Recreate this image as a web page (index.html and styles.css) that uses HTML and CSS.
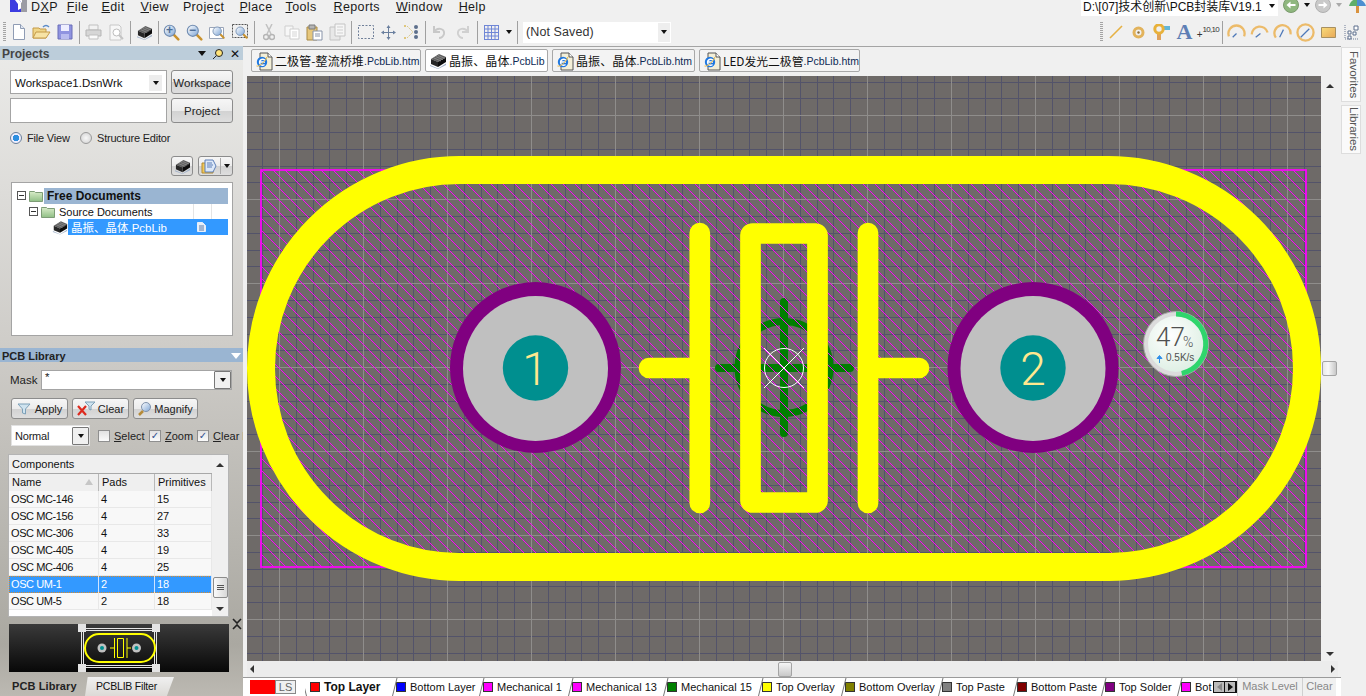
FILE: index.html
```html
<!DOCTYPE html>
<html lang="en">
<head>
<meta charset="utf-8">
<title>Altium Designer - PCB Library</title>
<link rel="stylesheet" href="styles.css">
</head>
<body>
<svg class="defs" width="0" height="0" aria-hidden="true">
  <defs>
    <linearGradient id="btnLens" x1="0" y1="0" x2="1" y2="1"><stop offset="0" stop-color="#ffffff"/><stop offset="1" stop-color="#7fa6d6"/></linearGradient>
    <linearGradient id="folder" x1="0" y1="0" x2="0" y2="1"><stop offset="0" stop-color="#d9ecc9"/><stop offset="1" stop-color="#8fbf85"/></linearGradient>
    <symbol id="ie" viewBox="0 0 18 20">
      <path d="M5 2h8l4 4v13H5z" fill="#f3efd8" stroke="#555"/>
      <path d="M13 2v4h4" fill="#fff" stroke="#555"/>
      <circle cx="7" cy="11" r="5.200" fill="#1f78e0"/>
      <path d="M4 11h6M10 9.500A3 3 0 1 0 9.500 13.500" fill="none" stroke="#fff" stroke-width="1.400"/>
      <path d="M1.500 15c2 1 8-3 10.500-9" fill="none" stroke="#e7b43c" stroke-width="1"/>
    </symbol>
    <symbol id="chip" viewBox="0 0 18 16">
      <path d="M1 12l8 3.500 8-5v1.500l-8 4-8-3z" fill="#9fb0c8"/>
      <path d="M2 6l8-5 7 3-8 5z" fill="#5e5e5e"/>
      <path d="M2 6l7 3v5l-7-3z" fill="#262626"/>
      <path d="M9 9l8-5v5l-8 5z" fill="#0d0d0d"/>
      <path d="M5 5l7 3M7 3.700l7 3M9 2.500l7 3" stroke="#9a9a9a" stroke-width=".7"/>
    </symbol>
    <symbol id="magnifier" viewBox="0 0 20 20">
      <path d="M12 12l6 6" stroke="#c9922e" stroke-width="3" stroke-linecap="round"/>
      <circle cx="8" cy="8" r="6.500" fill="url(#btnLens)" stroke="#6f8bb0" stroke-width="1.300"/>
    </symbol>
    <symbol id="foldericon" viewBox="0 0 14 12">
      <path d="M0.500 2.500V1.500h5l1 1h7v9H.5z" fill="url(#folder)" stroke="#7d9c76"/>
    </symbol>
  </defs>
</svg>

<header class="menubar">
  <svg class="logo" viewBox="0 0 17 12" width="17" height="12"><path d="M0 0h11v12H0z" fill="#3c3ce0"/><path d="M5 0h4l3 3v5l-4 2V4z" fill="#fff"/><path d="M11 0h6v12h-6z" fill="#9c9ca4"/><path d="M9 0h3l0 3z" fill="#fff"/></svg>
  <nav class="menus">
    <span class="menu menu-dxp">D<u>X</u>P</span>
    <span class="menu menu-file"><u>F</u>ile</span>
    <span class="menu menu-edit"><u>E</u>dit</span>
    <span class="menu menu-view"><u>V</u>iew</span>
    <span class="menu">Proje<u>c</u>t</span>
    <span class="menu menu-place"><u>P</u>lace</span>
    <span class="menu menu-tools"><u>T</u>ools</span>
    <span class="menu menu-wide"><u>R</u>eports</span>
    <span class="menu menu-wide"><u>W</u>indow</span>
    <span class="menu"><u>H</u>elp</span>
  </nav>
  <div class="pathbox"><span class="pathtext">D:\[07]技术创新\PCB封装库V19.1</span><span class="caret pathcaret"></span></div>
  <div class="navbtns">
    <svg width="16" height="16" viewBox="0 0 16 16"><circle cx="8" cy="8" r="7.500" fill="#8fb77f" stroke="#7a9a6d"/><path d="M3.500 8l4-3.500V7h5v2h-5v2.500z" fill="#fff"/></svg>
    <span class="caret caret-nav"></span>
    <svg width="16" height="16" viewBox="0 0 16 16"><circle cx="8" cy="8" r="7.500" fill="#c9c9c9" stroke="#b0b0b0"/><path d="M12.500 8l-4-3.500V7h-5v2h5v2.500z" fill="#fff"/></svg>
    <span class="caret caret-nav caret-off"></span>
    <svg class="treeicon" width="19" height="14" viewBox="0 0 19 14"><path d="M8 7h3v7H8z" fill="#d9923e"/><path d="M1 7c1-4 4-7 8-7v7z" fill="#5fae6a"/><path d="M9 0c4 0 8 3 9 7H9z" fill="#4d8fd0"/></svg>
  </div>
</header>

<div class="toolbar">
  <span class="grip"></span>
  <span class="tool"><svg width="16" height="18" viewBox="0 0 16 18"><path d="M2.500 1.500h7l4 4v11h-11z" fill="#fff" stroke="#8f9cb4"/><path d="M9.500 1.500v4h4" fill="#dfe6f2" stroke="#8f9cb4"/></svg></span>
  <span class="tool"><svg width="19" height="16" viewBox="0 0 19 16"><path d="M1 14V4h6l1 1h6v9z" fill="#f0d689" stroke="#c49a49"/><path d="M1 14l3-6h14l-4 6z" fill="#f7e3a5" stroke="#c49a49"/><path d="M11 3c2-2 4-2 6 0" fill="none" stroke="#5b8bc9" stroke-width="1.500"/></svg></span>
  <span class="tool"><svg width="16" height="16" viewBox="0 0 16 16"><path d="M1 1h14v14H1z" fill="#8f93e0" stroke="#6a6fb8"/><path d="M4 1h8v6H4z" fill="#eef"/><path d="M4 10h8v5H4z" fill="#b9bcef"/></svg></span>
  <span class="sep sep-w"></span>
  <span class="tool"><svg width="17" height="16" viewBox="0 0 17 16"><path d="M4 1h9v5H4z" fill="#f2f2f2" stroke="#c0c0c0"/><path d="M1 6h15v6H1z" fill="#d6d6d6" stroke="#b5b5b5"/><path d="M4 11h9v4H4z" fill="#fafafa" stroke="#c0c0c0"/></svg></span>
  <span class="tool"><svg width="17" height="17" viewBox="0 0 17 17"><path d="M2 1h9l2 2v13H2z" fill="#f7f7f7" stroke="#c8c8c8"/><circle cx="8.500" cy="8.500" r="3.500" fill="#fff" stroke="#bdbdbd"/><path d="M11 11l4 4" stroke="#c4c4c4" stroke-width="2"/></svg></span>
  <span class="sep"></span>
  <span class="tool"><svg width="17" height="15"><use href="#chip"/></svg></span>
  <span class="sep sep-n"></span>
  <span class="tool"><span class="mag"><svg width="17" height="17"><use href="#magnifier"/></svg><i class="plus">+</i></span></span>
  <span class="tool"><span class="mag"><svg width="17" height="17"><use href="#magnifier"/></svg><i class="plus">−</i></span></span>
  <span class="tool"><span class="mag"><svg width="17" height="17" viewBox="0 0 17 17"><path d="M.5 3.500h14v11H.5z" fill="#fff" stroke="#9aa5b8"/><use href="#magnifier" x="3" y="2" width="13" height="13"/></svg></span></span>
  <span class="tool"><span class="mag"><svg width="17" height="17" viewBox="0 0 17 17"><path d="M.5 .5h15v13H.5z" fill="none" stroke="#555" stroke-dasharray="2 1"/><use href="#magnifier" x="3" y="2" width="13" height="13"/></svg></span></span>
  <span class="sep"></span>
  <span class="tool"><svg width="12" height="17" viewBox="0 0 12 17"><path d="M3 0l5 10M9 0L4 10" stroke="#c2c2c2" stroke-width="1.500"/><circle cx="3" cy="13" r="2.500" fill="none" stroke="#b5b5b5" stroke-width="1.500"/><circle cx="9" cy="13" r="2.500" fill="none" stroke="#b5b5b5" stroke-width="1.500"/></svg></span>
  <span class="tool"><svg width="16" height="15" viewBox="0 0 16 15"><path d="M1 1h8v10H1z" fill="#f7f7f7" stroke="#cfcfcf"/><path d="M6 4h9v10H6z" fill="#fff" stroke="#cfcfcf"/><path d="M8 7h5M8 9h5M8 11h5" stroke="#d5d5d5"/></svg></span>
  <span class="tool"><svg width="17" height="17" viewBox="0 0 17 17"><path d="M1 3h10v13H1z" fill="#e6c77c" stroke="#a98a44"/><path d="M3 1h6v4H3z" fill="#b5b5b5" stroke="#7a7a7a"/><path d="M7 7h9v9H7z" fill="#fff" stroke="#8893a8"/><path d="M9 10h5M9 12h5" stroke="#8893a8"/></svg></span>
  <span class="tool"><svg width="17" height="18" viewBox="0 0 17 18"><path d="M1 4h10v13H1z" fill="#e8e8e8" stroke="#c4c4c4"/><path d="M6 1h10v12H6z" fill="#f6f6f6" stroke="#c4c4c4"/><path d="M8 4h6M8 7h6M8 10h6" stroke="#cfcfcf"/></svg></span>
  <span class="sep"></span>
  <span class="tool"><svg width="16" height="14" viewBox="0 0 16 14"><path d="M.5 .5h15v13H.5z" fill="none" stroke="#6f7f99" stroke-dasharray="2 1.500"/></svg></span>
  <span class="tool"><svg width="15" height="15" viewBox="0 0 15 15"><path d="M7.500 1v13M1 7.500h13" stroke="#6a7f9e"/><path d="M7.500 0l-2 3h4zM7.500 15l-2-3h4zM0 7.500l3-2v4zM15 7.500l-3-2v4z" fill="#6a7f9e"/></svg></span>
  <span class="tool"><svg width="16" height="14" viewBox="0 0 16 14"><path d="M0 1h3M0 13h3" stroke="#d9b957" stroke-width="1.500" stroke-dasharray="2 1"/><path d="M3 1l6 6-6 6" fill="none" stroke="#d9c88a" stroke-dasharray="2 1"/><circle cx="12" cy="2" r="2" fill="#5d6f8c"/><circle cx="12" cy="7" r="2" fill="#5d6f8c"/><circle cx="12" cy="12" r="2" fill="#5d6f8c"/></svg></span>
  <span class="sep"></span>
  <span class="tool"><svg width="13" height="14" viewBox="0 0 13 14"><path d="M1 1v6h6M1 7c3-5 11-4 10 2-1 3-3 4-5 4" fill="none" stroke="#c8c8c8" stroke-width="2"/></svg></span>
  <span class="tool"><svg width="13" height="14" viewBox="0 0 13 14"><path d="M12 1v6H6M12 7C9 2 1 3 2 9c1 3 3 4 5 4" fill="none" stroke="#d0d0d0" stroke-width="2"/></svg></span>
  <span class="sep sep-w"></span>
  <span class="tool"><svg width="15" height="15" viewBox="0 0 15 15"><path d="M.5 0v15M4 0v15M7.500 0v15M11 0v15M14.500 0v15M0 .5h15M0 4h15M0 7.500h15M0 11h15M0 14.500h15" stroke="#6f86d6"/></svg></span>
  <span class="tool tool-drop"><span class="caret"></span></span>
  <span class="sep sep-n"></span>
  <div class="savebox"><span>(Not Saved)</span><span class="savebtn"><i class="caret"></i></span></div>

  <div class="toolgroup">
    <span class="grip"></span>
    <span class="tool"><svg width="14" height="14" viewBox="0 0 14 14"><path d="M1 13L13 1" stroke="#e6b144" stroke-width="1.600"/></svg></span>
    <span class="tool"><svg width="13" height="13" viewBox="0 0 13 13"><circle cx="6.500" cy="6.500" r="4.500" fill="none" stroke="#e2b35c" stroke-width="3"/><circle cx="6.500" cy="6.500" r="1.200" fill="#8a6d3a"/></svg></span>
    <span class="tool"><svg width="17" height="16" viewBox="0 0 17 16"><path d="M4 8h4v8H4z" fill="#e0a25a"/><path d="M10 2h7v4h-7z" fill="#62b6d8"/><circle cx="6" cy="5" r="4.200" fill="none" stroke="#e8b13a" stroke-width="3"/></svg></span>
    <span class="tool tool-a">A</span>
    <span class="tool tool-coord"><b>+</b><i>10,10</i></span>
    <span class="sep sep-right"></span>
    <span class="tool"><svg width="19" height="19" viewBox="0 0 20 20"><path d="M2 14A8.500 8.500 0 1 1 18 14" fill="none" stroke="#ecbb6a" stroke-width="2.400"/><path d="M6 15l4-4" stroke="#4d78b8" stroke-width="1.300"/></svg></span>
    <span class="tool"><svg width="19" height="19" viewBox="0 0 20 20"><path d="M1.800 12A8.500 8.500 0 0 1 18.500 10" fill="none" stroke="#ecbb6a" stroke-width="2.400"/><path d="M6 15l5-4" stroke="#4d78b8" stroke-width="1.300"/></svg></span>
    <span class="tool"><svg width="19" height="19" viewBox="0 0 20 20"><path d="M3 15.500A8.500 8.500 0 1 1 18.400 12" fill="none" stroke="#ecbb6a" stroke-width="2.400"/><path d="M7 15l4-8" stroke="#4d78b8" stroke-width="1.300"/></svg></span>
    <span class="tool"><svg width="19" height="19" viewBox="0 0 20 20"><circle cx="10" cy="10" r="8.500" fill="none" stroke="#ecbb6a" stroke-width="2.400"/><path d="M5 15l9-9" stroke="#4d78b8" stroke-width="1.300"/></svg></span>
    <span class="tool"><svg width="15" height="11" viewBox="0 0 15 11"><defs><linearGradient id="rectgold" x1="0" y1="0" x2="1" y2="1"><stop offset="0" stop-color="#f9dc7a"/><stop offset="1" stop-color="#e8a858"/></linearGradient></defs><path d="M.5 .5h14v10H.5z" fill="url(#rectgold)" stroke="#a89060"/></svg></span>
    <span class="tool"><svg width="16" height="16" viewBox="0 0 16 16"><path d="M1 1v14h14" fill="none" stroke="#6f7d96" stroke-dasharray="1 1"/><path d="M4 7h3v3H4zM10 2h4v4h-4zM4 12h3v3H4zM9 8h3v3H9z" fill="#fff" stroke="#5d6f8c"/></svg></span>
  </div>
</div>

<div class="main">
  <aside class="left">
    <div class="panelhead panelhead-muted">
      <span>Projects</span>
      <span class="headicons"><i class="tri-down"></i><svg width="10" height="10" viewBox="0 0 10 10"><circle cx="6" cy="4" r="3.500" fill="#ffe37a" stroke="#222"/><path d="M3 7L0 10" stroke="#222"/></svg><i class="closex">✕</i></span>
    </div>
    <div class="formrow row-ws">
      <div class="field field-wide"><span>Workspace1.DsnWrk</span><span class="ddflat"><i class="caret"></i></span></div>
      <button class="btn btn-side">Workspace</button>
    </div>
    <div class="formrow row-pr">
      <div class="field field-wide"></div>
      <button class="btn btn-side">Project</button>
    </div>
    <div class="radios">
      <span class="radio radio-on"></span><span class="radiolabel">File View</span>
      <span class="radio"></span><span class="radiotext">Structure Editor</span>
    </div>
    <div class="treebtns">
      <button class="btn btn-icon"><svg width="17" height="15"><use href="#chip"/></svg></button>
      <button class="btn btn-split">
        <svg width="17" height="15" viewBox="0 0 17 15"><path d="M1 14V4h11v10z" fill="#f2c857" stroke="#b28a33"/><path d="M4 1h8l3 6-3 6H4z" fill="#dce8f8" stroke="#5d7fb8"/><path d="M6 4h5M6 6h6M6 8h5" stroke="#5d7fb8"/></svg>
        <span class="splitcaret"><i class="caret"></i></span>
      </button>
    </div>
    <div class="tree">
      <div class="trow trow-root">
        <span class="expander"></span>
        <svg class="tfolder" width="14" height="12"><use href="#foldericon"/></svg>
        <span class="tlabel tlabel-bold">Free Documents</span>
      </div>
      <div class="trow trow-sub">
        <span class="expander"></span>
        <svg class="tfolder" width="14" height="12"><use href="#foldericon"/></svg>
        <span class="tlabel tlabel-src">Source Documents</span>
        <span class="tcell"></span><span class="tcell"></span>
      </div>
      <div class="trow trow-file">
        <svg class="tchip" width="16" height="15"><use href="#chip"/></svg>
        <span class="tlabel tlabel-sel"><span class="tname">晶振、晶体.PcbLib</span>
          <svg class="tdoc" width="9" height="10" viewBox="0 0 9 10"><path d="M.5 .5h5l3 3v6h-8z" fill="#e8eef8" stroke="#e8eef8"/><path d="M2 4h5M2 6h5M2 8h5" stroke="#5a7aa8"/></svg>
        </span>
      </div>
    </div>

    <div class="panelhead panelhead-blue">
      <span>PCB Library</span>
      <span class="headchev"></span>
    </div>
    <div class="maskrow">
      <label>Mask</label>
      <div class="field field-mask"><span class="maskval">*</span><span class="ddbtn"><i class="caret"></i></span></div>
    </div>
    <div class="actions">
      <button class="btn btn-act btn-apply"><svg width="14" height="12" viewBox="0 0 14 12"><path d="M1 1h12L8.500 6v5l-3-1V6z" fill="#cfe3ef" stroke="#7da0b8"/></svg>Apply</button>
      <button class="btn btn-act btn-clear"><svg width="19" height="15" viewBox="0 0 19 15"><path d="M8 1h10l-4 4v4l-2-1V5z" fill="#cfe3ef" stroke="#7da0b8"/><path d="M1 5l8 9M9 5l-8 9" stroke="#dd2a1e" stroke-width="2.200"/></svg>Clear</button>
      <button class="btn btn-act btn-mag"><svg width="13" height="14" viewBox="0 0 13 14"><circle cx="8" cy="5" r="4.500" fill="url(#btnLens)" stroke="#7f92ac"/><path d="M5 9l-4 4" stroke="#b58a38" stroke-width="2.500"/></svg>Magnify</button>
    </div>
    <div class="filterrow">
      <div class="field field-mode"><span>Normal</span><span class="ddbtn"><i class="caret"></i></span></div>
      <span class="check"></span><span class="checklabel"><u>S</u>elect</span>
      <span class="check check-on">✓</span><span class="checklabel checklabel-zoom"><u>Z</u>oom</span>
      <span class="check check-on">✓</span><span class="checklabel checklabel-clip"><u>C</u>lear E</span>
    </div>
    <div class="comptable">
      <div class="compmain">
        <div class="comptitle">Components</div>
        <div class="comprow comphead"><span>Name<i class="sortup"></i></span><span>Pads</span><span>Primitives</span></div>
        <div class="comprow"><span>OSC MC-146</span><span>4</span><span>15</span></div>
        <div class="comprow"><span>OSC MC-156</span><span>4</span><span>27</span></div>
        <div class="comprow"><span>OSC MC-306</span><span>4</span><span>33</span></div>
        <div class="comprow"><span>OSC MC-405</span><span>4</span><span>19</span></div>
        <div class="comprow"><span>OSC MC-406</span><span>4</span><span>25</span></div>
        <div class="comprow comprow-sel"><span>OSC UM-1</span><span>2</span><span>18</span></div>
        <div class="comprow"><span>OSC UM-5</span><span>2</span><span>18</span></div>
      </div>
      <div class="compscroll">
        <i class="sb-up"></i>
        <span class="compthumb"><b></b><b></b><b></b></span>
        <i class="sb-down"></i>
      </div>
    </div>
    <svg class="collapse" width="10" height="12" viewBox="0 0 10 12"><path d="M1 1l4 4 4-4M1 11l4-4 4 4" fill="none" stroke="#222" stroke-width="1.600"/></svg>
    <div class="preview">
      <svg width="220" height="48" viewBox="9 624 220 48">
        <path d="M81.500 627v42M156.500 627v42M84 630.500h70M84 665.500h70M84 628.500h70M84 667.500h70M83.500 627v42M154.500 627v42" stroke="#e6e6e6" fill="none"/>
        <path d="M78 624h8v8h-8zM152 624h8v8h-8zM78 664h8v8h-8zM152 664h8v8h-8z" fill="#e4e4e4"/>
        <rect x="85" y="634" width="70" height="28" rx="14" fill="none" stroke="#ffff00" stroke-width="2"/>
        <circle cx="102" cy="648" r="4.500" fill="#c0c0c0"/><circle cx="102" cy="648" r="2" fill="#008f8f"/>
        <circle cx="136.500" cy="648" r="4.500" fill="#c0c0c0"/><circle cx="136.500" cy="648" r="2" fill="#008f8f"/>
        <path d="M110 648h4M114.500 638v20M127 638v20M127 648h4M117.500 638.500h6v19h-6z" fill="none" stroke="#ffff00"/>
      </svg>
    </div>
    <div class="paneltabs">
      <span class="ptab ptab-on">PCB Library</span>
      <span class="ptab">PCBLIB Filter</span>
    </div>
  </aside>

  <section class="center">
    <div class="doctabs">
      <span class="doctab"><svg width="18" height="20"><use href="#ie"/></svg><span class="cjk">二极管-整流桥堆</span><span class="ext">.PcbLib.htm</span></span>
      <span class="doctab doctab-on"><svg width="18" height="16"><use href="#chip"/></svg><span class="cjk">晶振、晶体</span><span class="ext">.PcbLib</span></span>
      <span class="doctab"><svg width="18" height="20"><use href="#ie"/></svg><span class="cjk">晶振、晶体</span><span class="ext">.PcbLib.htm</span></span>
      <span class="doctab"><svg width="18" height="20"><use href="#ie"/></svg><span class="cjk cjk-led">LED发光二极管</span><span class="ext">.PcbLib.htm</span></span>
    </div>
    <div class="canvasrow">
      <svg class="canvas" width="1074" height="585" viewBox="247 76 1074 585">
        <defs>
          <pattern id="grid" patternUnits="userSpaceOnUse" x="279" y="115" width="84" height="84">
            <path class="gridminor" d="M17.500 0v84M34.500 0v84M50.500 0v84M67.500 0v84M0 17.500h84M0 34.500h84M0 51.500h84M0 67.500h84"/>
            <path class="gridmajor" d="M.5 0v84M0 .5h84"/>
          </pattern>
          <pattern id="hatch" patternUnits="userSpaceOnUse" x="261" y="170" width="12" height="12">
            <path class="hatchline" d="M0 0L12 12"/>
          </pattern>
          <radialGradient id="widget" cx=".4" cy=".35" r=".8"><stop offset="0" stop-color="#ffffff"/><stop offset="1" stop-color="#d8ecdf"/></radialGradient>
        </defs>
        <rect x="247" y="76" width="1074" height="585" fill="#6e6a68"/>
        <rect x="247" y="76" width="1074" height="585" fill="url(#grid)"/>
        <g class="mech15">
          <path d="M784 302v131M719 368h131"/>
          <circle cx="784" cy="367.500" r="46"/>
        </g>
        <rect class="keepout" x="261" y="170" width="1045" height="397" fill="url(#hatch)"/>
        <g class="overlay">
          <rect class="outline" x="261" y="170" width="1046" height="397" rx="198.500"/>
          <path d="M699.800 233v270M868 233v270M649 368h50M868 368h51"/>
          <rect class="crystal" x="750.500" y="233.500" width="67" height="269" rx="2"/>
        </g>
        <g>
          <circle cx="535.500" cy="367.500" r="85.500" fill="#800080"/>
          <circle cx="535.500" cy="368.500" r="72.500" fill="#c0c0c0"/>
          <circle cx="535.500" cy="368" r="32.700" fill="#008f8f"/>
          <text class="padnum" x="535" y="385">1</text>
          <circle cx="1033" cy="367.500" r="85.500" fill="#800080"/>
          <circle cx="1033" cy="368.500" r="72.500" fill="#c0c0c0"/>
          <circle cx="1033" cy="368" r="32.700" fill="#008f8f"/>
          <text class="padnum" x="1033" y="385">2</text>
        </g>
        <g class="origin">
          <circle cx="784" cy="368" r="19.500"/>
          <path d="M764 348l40 40M804 348l-40 40"/>
        </g>
        <g>
          <circle cx="1176" cy="344" r="32.500" fill="#dcdcdc" stroke="#a8a8a8"/>
          <circle cx="1176" cy="344" r="28" fill="url(#widget)"/>
          <path class="widgetarc" d="M1176 314A30 30 0 0 1 1181.700 373.400"/>
          <text class="widgetnum" x="1156" y="346">47</text>
          <text class="widgetpct" x="1183" y="347">%</text>
          <path d="M1159.500 363v-6M1157 358.500l2.500-3 2.500 3z" stroke="#2f8fea" fill="#2f8fea"/>
          <text class="widgetspeed" x="1166" y="361">0.5K/s</text>
        </g>
      </svg>
      <div class="vscroll">
        <i class="sb-up"></i>
        <span class="vthumb"></span>
        <i class="sb-down"></i>
      </div>
    </div>
    <div class="hscroll">
      <i class="sb-left"></i>
      <span class="hthumb"></span>
      <i class="sb-right"></i>
    </div>
    <div class="layerbar">
      <span class="curlayer"></span><span class="lsbox">LS</span>
      <div class="ltabs">
        <span class="ltab ltab-on"><i class="sw sw-red"></i>Top Layer</span>
        <span class="ltab"><i class="sw sw-blue"></i>Bottom Layer</span>
        <span class="ltab"><i class="sw sw-mag"></i>Mechanical 1</span>
        <span class="ltab"><i class="sw sw-mag"></i>Mechanical 13</span>
        <span class="ltab"><i class="sw sw-green"></i>Mechanical 15</span>
        <span class="ltab"><i class="sw sw-yellow"></i>Top Overlay</span>
        <span class="ltab"><i class="sw sw-olive"></i>Bottom Overlay</span>
        <span class="ltab"><i class="sw sw-grey"></i>Top Paste</span>
        <span class="ltab"><i class="sw sw-maroon"></i>Bottom Paste</span>
        <span class="ltab"><i class="sw sw-purple"></i>Top Solder</span>
        <span class="ltab"><i class="sw sw-mag"></i>Bot</span>
      </div>
      <span class="lnav"><i class="lnav-l"></i><i class="lnav-r"></i></span>
      <span class="lbtn lbtn-mask">Mask Level</span>
      <span class="lbtn lbtn-clear">Clear</span>
    </div>
  </section>

  <aside class="right">
    <span class="sidetab sidetab-fav">Favorites</span>
    <span class="sidetab sidetab-lib">Libraries</span>
  </aside>
</div>
</body>
</html>
```
FILE: styles.css
```css
* { box-sizing: border-box; }
html, body { margin: 0; padding: 0; }
body {
  width: 1366px; height: 696px; overflow: hidden;
  display: flex; flex-direction: column;
  background: #f0f0f0; color: #111;
  font: 11.5px "Liberation Sans", "Noto Sans CJK SC", sans-serif;
}
i { font-style: normal; }
button { font: inherit; color: inherit; padding: 0; cursor: default; }
svg { display: block; flex: none; }
.defs { position: absolute; }

.caret { display: inline-block; width: 0; height: 0; border: 3.5px solid transparent; border-top: 4px solid #111; border-bottom: 0; }

/* menu */
.menubar { height: 16px; flex: none; display: flex; align-items: flex-start; overflow: hidden; padding-left: 10px; }
.logo { margin-right: 4px; }
.menus { display: flex; font-size: 12.5px; line-height: 14px; letter-spacing: .37px; }
.menu { margin-right: 15px; color: #1a1a1a; }
.menu-dxp { margin-right: 9px; }
.menu-file { margin-right: 13px; }
.menu-edit { margin-right: 16px; }
.menu-view { margin-right: 14px; }
.menu-place { margin-right: 13px; }
.menu-tools { margin-right: 17px; }
.menu-wide { margin-right: 16px; }
.pathbox { margin-left: auto; width: 197px; height: 16px; background: #fff; display: flex; justify-content: space-between; align-items: flex-start; padding: 0 3px 0 2px; font-size: 12px; line-height: 14px; color: #111; white-space: nowrap; margin-right: 5px; }
.pathtext { overflow: hidden; }
.pathcaret { margin-top: 4px; }
.navbtns { display: flex; align-items: flex-start; gap: 3px; width: 83px; margin-top: -3px; }
.caret-nav { margin: 6px 2px 0 2px; }
.caret-off { border-top-color: #aaa; }
.treeicon { margin-left: 1px; margin-top: 2px; }

/* toolbar */
.toolbar { height: 30px; flex: none; display: flex; align-items: center; padding: 2px 0 0 3px; }
.grip { width: 3px; height: 20px; margin-right: 1px; background: repeating-linear-gradient(#a4a4a4 0 1px, transparent 1px 2px); }
.tool { width: 23px; height: 26px; flex: none; display: flex; align-items: center; justify-content: center; }
.tool-drop { width: 12px; }
.sep { width: 1px; height: 23px; margin: 0 2px; background: #a0a0a0; flex: none; }
.sep-w { margin: 0 2px 0 3px; }
.sep-n { margin: 0 1px 0 2px; }
.mag { position: relative; display: block; width: 17px; height: 17px; }
.plus { position: absolute; left: 1px; top: -1px; width: 11px; text-align: center; font: bold 12px/15px "Liberation Sans", sans-serif; color: #4e6d96; }
.savebox { width: 148px; height: 21px; margin-left: 4px; background: #fff; display: flex; align-items: center; justify-content: space-between; padding-left: 3px; font-size: 12.5px; letter-spacing: .1px; color: #333; }
.savebtn { width: 12px; height: 19px; background: #eee; display: flex; align-items: center; justify-content: center; margin-right: 1px; }
.toolgroup { margin-left: auto; display: flex; align-items: center; margin-right: 3px; }
.tool-a { font: bold 22px "Liberation Serif", serif; color: #5f7fb5; }
.tool-coord { color: #333; justify-content: flex-end; white-space: nowrap; }
.tool-coord b { font: 10px "Liberation Sans", sans-serif; align-self: flex-end; margin-bottom: 5px; }
.tool-coord i { font: 8px "Liberation Sans", sans-serif; letter-spacing: -.7px; align-self: flex-start; margin-top: 6px; }
.sep-right { margin: 0 2px 0 3px; }

/* main */
.main { flex: 1; display: flex; min-height: 0; }
.left { width: 243px; flex: none; position: relative; display: flex; flex-direction: column; background: linear-gradient(#ebebe9 0, #cfcdc9 45%, #aaa8a1 92%, #bcb9b2 100%); overflow: hidden; }
.panelhead { height: 14px; flex: none; display: flex; align-items: center; justify-content: space-between; padding: 1px 0 0 2px; font-weight: bold; font-size: 12px; }
.panelhead-muted { background: #bccdda; color: #444; }
.panelhead-blue { background: #9ab5d2; color: #222; margin-top: 12px; font-size: 11px; }
.headicons { display: flex; align-items: center; gap: 7px; padding-right: 3px; }
.tri-down { border: 4.500px solid transparent; border-top: 5px solid #111; border-bottom: 0; }
.closex { font: bold 12px/12px "DejaVu Sans", sans-serif; color: #111; }
.headchev { width: 0; height: 0; border: 5px solid transparent; border-top: 6px solid #fff; border-bottom: 0; margin-right: 2px; }

.formrow { display: flex; gap: 4px; margin-left: 10px; flex: none; }
.row-ws { height: 24px; margin-top: 10px; }
.row-ws > * { padding-top: 2px; }
.row-pr { height: 25px; margin-top: 4px; }
.field { background: #fff; border: 1px solid #a4a4a4; display: flex; align-items: center; justify-content: space-between; }
.field-wide { width: 157px; padding-left: 4px; }
.ddflat { width: 13px; height: 16px; background: #ededed; margin-right: 4px; display: flex; align-items: center; justify-content: center; }
.btn { border: 1px solid #8c8c8c; border-radius: 3px; background: linear-gradient(#f6f6f6 0, #ececec 50%, #d2d2d2 52%, #dedede 100%); color: #222; display: flex; align-items: center; justify-content: center; }
.btn-side { width: 62px; }
.radios { height: 16px; margin-top: 7px; margin-left: 10px; display: flex; align-items: center; flex: none; color: #222; font-size: 11px; letter-spacing: -.2px; }
.radio { width: 12px; height: 12px; border-radius: 50%; border: 1px solid #9a9a9a; background: radial-gradient(#f8f8f8, #cfcfcf); margin-right: 5px; flex: none; }
.radio-on { background: radial-gradient(#2d8fe0 0 3px, #eef 3.500px); border-color: #6a7f99; }
.radiolabel { width: 53px; }
.treebtns { height: 20px; margin-top: 10px; display: flex; justify-content: flex-end; gap: 5px; padding-right: 10px; flex: none; }
.btn-icon { width: 22px; }
.btn-split { width: 35px; gap: 1px; justify-content: flex-start; padding-left: 2px; }
.splitcaret { height: 16px; border-left: 1px solid #aaa; padding-left: 3px; display: flex; align-items: center; margin-left: 1px; }

.tree { margin: 6px 10px 0 11px; height: 154px; background: #fff; border: 1px solid #a4a4a4; padding-top: 4px; flex: none; }
.trow { display: flex; align-items: center; }
.trow-root { height: 17px; padding-left: 5px; }
.trow-sub { height: 15px; padding-left: 17px; }
.trow-file { height: 16px; padding-left: 40px; }
.expander { width: 9px; height: 9px; border: 1px solid #555; margin-right: 3px; flex: none; background: linear-gradient(#333, #333) center / 5px 1px no-repeat; }
.tfolder { margin-right: 1px; }
.tlabel-bold { flex: 1; height: 16px; background: #9ab5d2; font-weight: bold; font-size: 12px; line-height: 16px; padding-left: 3px; margin-right: 4px; }
.tlabel-src { padding-left: 3px; width: 137px; font-size: 11px; }
.tcell { width: 18px; height: 15px; border-left: 1px solid #e4e4e4; flex: none; }
.tlabel-sel { flex: 1; height: 16px; margin-right: 4px; background: #3399ff; color: #fff; display: flex; align-items: center; padding-left: 3px; }
.tname { width: 126px; white-space: nowrap; font-size: 11.5px; }

.maskrow { display: flex; align-items: center; height: 20px; margin-top: 8px; padding-left: 10px; flex: none; color: #222; }
.maskrow label { width: 31px; }
.field-mask { width: 191px; height: 20px; padding-left: 3px; }
.maskval { align-self: flex-start; }
.ddbtn { width: 17px; height: 18px; background: #f0f0f0; border: 1px solid #777; border-radius: 1px; display: flex; align-items: center; justify-content: center; flex: none; }
.actions { display: flex; gap: 4px; height: 21px; margin-top: 8px; padding-left: 11px; flex: none; }
.btn-act { gap: 2px; font-size: 11px; }
.btn-apply { width: 57px; gap: 4px; }
.btn-clear { width: 57px; }
.btn-mag { width: 65px; gap: 3px; }
.filterrow { display: flex; align-items: center; height: 21px; margin-top: 6px; padding-left: 11px; white-space: nowrap; flex: none; color: #222; font-size: 11px; }
.field-mode { width: 79px; height: 21px; padding-left: 3px; margin-right: 8px; letter-spacing: -.2px; border-color: #e2e2e2; flex: none; }
.check { width: 12px; height: 12px; border: 1px solid #8f8f8f; background: linear-gradient(#e2e2e2, #fbfbfb); margin-right: 4px; flex: none; display: flex; align-items: center; justify-content: center; font: bold 10px/10px "DejaVu Sans", sans-serif; color: #2f4f8f; }
.checklabel { width: 35px; flex: none; }
.checklabel-zoom { width: 32px; }
.checklabel-clip { width: auto; }

.comptable { margin: 8px 14px 0 8px; height: 163px; display: flex; background: #fff; border: 1px solid #b4b4b4; flex: none; font-size: 11px; }
.compmain { width: 203px; flex: none; background: #fff; }
.comptitle { height: 19px; line-height: 18px; padding-left: 3px; background: #efefef; border-bottom: 1px solid #a8a8a8; }
.comprow { height: 17px; display: grid; grid-template-columns: 90px 56px 57px; background: #f8f8f8; border-bottom: 1px solid #e8e8e8; line-height: 16px; }
.comprow span { padding-left: 2px; border-right: 1px solid #e8e8e8; position: relative; white-space: nowrap; }
.comprow:not(.comphead) span:first-child { letter-spacing: -.4px; }
.comphead { background: #efefef; border-bottom: 0; }
.comphead span { padding-left: 3px; border-right: 1px solid #b8b8b8; }
.sortup { position: absolute; right: 5px; top: 5px; border: 4px solid transparent; border-bottom: 6px solid #c6c6c6; border-top: 0; }
.comprow-sel { background: #3399ff; color: #fff; outline: 1px dotted #d98a2a; outline-offset: -1px; border-bottom: 0; }
.comprow-sel span { border-right-color: #cfe4ff; }
.compscroll { flex: 1; background: #f0f0f0; position: relative; }
.compthumb { position: absolute; left: 1px; bottom: 18px; width: 15px; height: 21px; background: linear-gradient(90deg, #fafafa, #d8d8d8); border: 1px solid #8c8c8c; border-radius: 2px; display: flex; flex-direction: column; justify-content: center; gap: 1px; padding: 0 3px; }
.compthumb b { height: 1px; background: #555; }
.sb-up, .sb-down, .sb-left, .sb-right { position: absolute; width: 0; height: 0; border: 4px solid transparent; }
.sb-up { top: 8px; left: 50%; margin-left: -4px; border-bottom: 4px solid #333; border-top: 0; }
.sb-down { bottom: 5px; left: 50%; margin-left: -4px; border-top: 4px solid #333; border-bottom: 0; }
.sb-left { left: 3px; top: 4px; border-right: 4px solid #333; border-left: 0; }
.sb-right { right: 3px; top: 4px; border-left: 4px solid #333; border-right: 0; }
.collapse { position: absolute; left: 232px; top: 572px; }
.preview { margin: 7px 14px 0 9px; height: 48px; background: linear-gradient(#3a3a3a, #080808); flex: none; }
.paneltabs { margin-top: 5px; height: 19px; display: flex; flex: none; padding-left: 12px; }
.ptab { line-height: 19px; }
.ptab-on { font-weight: bold; font-size: 11px; letter-spacing: .1px; width: 73px; color: #222; }
.ptab:not(.ptab-on) { width: 89px; padding-left: 11px; font-size: 10.5px; letter-spacing: -.2px; background: linear-gradient(#f0f0f0, #dcdad6); clip-path: polygon(3% 0, 100% 0, 92% 100%, 0 100%); }

/* centre */
.center { width: 1098px; flex: none; padding-left: 4px; display: flex; flex-direction: column; border-top: 1px solid #a4a4a4; min-height: 0; }
.doctabs { height: 29px; flex: none; display: flex; gap: 4px; padding: 2px 0 0 4px; align-items: flex-start; }
.doctab { height: 23px; flex: none; border: 1px solid #a8a8a8; border-radius: 2px; background: #f3f3f3; display: flex; align-items: center; white-space: nowrap; padding-left: 3px; }
.doctab:nth-child(1) { width: 170px; }
.doctab:nth-child(2) { width: 123px; background: #fff; }
.doctab:nth-child(3) { width: 143px; }
.doctab:nth-child(4) { width: 161px; }
.cjk { margin-left: 2px; font-family: "Noto Sans CJK SC", sans-serif; font-size: 12px; letter-spacing: .1px; }
.cjk-led { font-size: 11.8px; letter-spacing: 0; }
.ext { font-size: 10.5px; color: #0e2a55; }
.canvasrow { height: 585px; flex: none; display: flex; }
.canvas { flex: none; }
.gridminor { stroke: #53536a; stroke-width: 1; fill: none; shape-rendering: crispEdges; }
.gridmajor { stroke: #8f8d8b; stroke-width: 1; fill: none; shape-rendering: crispEdges; }
.hatchline { stroke: #ff00ff; stroke-width: 1; fill: none; }
.keepout { stroke: #ff00ff; stroke-width: 1.700; }
.mech15 { fill: none; stroke: #007f00; stroke-width: 8; stroke-linecap: round; }
.mech15 circle { stroke-width: 7; }
.overlay { fill: none; stroke: #ffff00; stroke-width: 20.700; stroke-linecap: round; }
.outline { stroke-width: 28; }
.padnum { font: 300 46px Roboto, "Liberation Sans", sans-serif; fill: #ffe88f; text-anchor: middle; }
.origin { fill: none; stroke: #fff; stroke-width: 1; }
.widgetarc { fill: none; stroke: #2fd56c; stroke-width: 5; }
.widgetnum { font: 300 26px Roboto, "Liberation Sans", sans-serif; fill: #505050; }
.widgetpct { font: 300 14px Roboto, "Liberation Sans", sans-serif; fill: #505050; }
.widgetspeed { font: 10px "Liberation Sans", sans-serif; fill: #505050; }
.vscroll { width: 17px; flex: none; position: relative; }
.vthumb { position: absolute; left: 1px; top: 285px; width: 15px; height: 15px; border: 1px solid #a4a4a4; border-radius: 2px; background: linear-gradient(90deg, #e8e8e8, #f8f8f8 40%, #c8c8c8); }
.hscroll { height: 16px; width: 1091px; flex: none; position: relative; background: #ececec; }
.hthumb { position: absolute; left: 531px; top: 1px; width: 14px; height: 15px; border: 1px solid #a4a4a4; border-radius: 2px; background: linear-gradient(#f6f6f6, #c8c8c8); }
.layerbar { height: 19px; flex: none; margin-left: -4px; padding-left: 7px; border-top: 1px solid #9a9a9a; background: #fff; display: flex; align-items: center; font-size: 11px; overflow: hidden; }
.curlayer { width: 25px; height: 14px; background: #ff0000; flex: none; }
.lsbox { width: 21px; height: 14px; border: 1px solid #888; background: #f0f0f0; color: #666; text-align: center; line-height: 13px; flex: none; margin-right: 9px; }
.ltabs { width: 908px; flex: none; height: 18px; display: grid; grid-template-columns: 86px 87px 89px 95px 95px 83px 97px 75px 88px 76px 32px; overflow: hidden; }
.ltab { display: flex; align-items: center; gap: 4px; padding-left: 5px; white-space: nowrap; position: relative; color: #111; }
.ltab::before { content: ""; position: absolute; left: 0; top: 0; bottom: 0; width: 1px; background: #777; transform: skewX(-14deg); transform-origin: bottom; margin-left: 1px; }
.ltab:first-child::before { transform: skewX(14deg); }
.ltab-on { font-weight: bold; font-size: 12px; }
.sw { width: 10px; height: 10px; border: 1px solid #333; flex: none; }
.sw-red { background: #ff0000; } .sw-blue { background: #0000ff; } .sw-mag { background: #ff00ff; } .sw-green { background: #008000; }
.sw-yellow { background: #ffff00; } .sw-olive { background: #808000; } .sw-grey { background: #808080; } .sw-maroon { background: #800000; } .sw-purple { background: #800080; }
.lnav { width: 24px; height: 12px; border: 1px solid #111; display: flex; flex: none; background: #bbb; }
.lnav i { flex: 1; position: relative; border-right: 1px solid #111; }
.lnav-l::after, .lnav-r::after { content: ""; position: absolute; top: 1px; left: 3px; border: 4px solid transparent; }
.lnav-l::after { border-right: 5px solid #888; border-left: 0; }
.lnav-r::after { border-left: 5px solid #111; border-right: 0; }
.lbtn { height: 18px; line-height: 17px; background: #f0f0f0; color: #888; flex: none; text-align: center; border-left: 1px solid #d0d0d0; }
.lbtn-mask { width: 65px; }
.lbtn-clear { width: 34px; }

/* right */
.right { flex: 1; display: flex; flex-direction: column; gap: 3px; padding: 1px 5px 0 0; }
.sidetab { writing-mode: vertical-rl; width: 20px; background: #fafafa; border: 1px solid #ddd; color: #555; text-align: center; font-size: 11.5px; }
.sidetab-fav { height: 55px; }
.sidetab-lib { height: 49px; }
```
